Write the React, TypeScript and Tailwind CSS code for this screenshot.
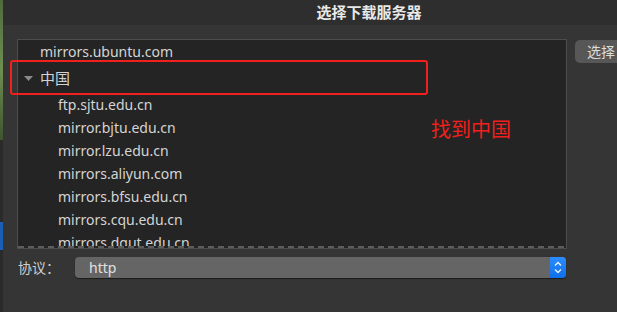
import React from 'react';

const mirrors = [
  'ftp.sjtu.edu.cn',
  'mirror.bjtu.edu.cn',
  'mirror.lzu.edu.cn',
  'mirrors.aliyun.com',
  'mirrors.bfsu.edu.cn',
  'mirrors.cqu.edu.cn',
  'mirrors.dgut.edu.cn',
];

const font = 'font-["Noto_Sans","Noto_Sans_CJK_SC",sans-serif]';

function Stepper() {
  return (
    <div className="flex h-full w-[16px] flex-col items-center justify-center gap-[3px] rounded-r-[4px] bg-gradient-to-b from-[#2b8cff] to-[#0d6fe8]">
      <svg width="8" height="5" viewBox="0 0 8 5">
        <path d="M1 4.5 L4 1.5 L7 4.5" stroke="#e8f2ff" strokeWidth="1.4" fill="none" />
      </svg>
      <svg width="8" height="5" viewBox="0 0 8 5">
        <path d="M1 0.5 L4 3.5 L7 0.5" stroke="#e8f2ff" strokeWidth="1.4" fill="none" />
      </svg>
    </div>
  );
}

export default function App() {
  return (
    <div className={`relative flex h-[312px] w-[617px] overflow-hidden bg-[#353535] ${font}`}>
      {/* sliver of the window behind */}
      <div className="flex w-[3px] shrink-0 flex-col">
        <div className="h-[140px] bg-gradient-to-b from-[#4f6a3e] via-[#6f8f52] to-[#3e5530]" />
        <div className="h-[82px] bg-[#2a2a2a]" />
        <div className="h-[28px] bg-[#1a5fb4]" />
        <div className="flex-1 bg-[#2a2a2a]" />
      </div>

      {/* dialog runs past the right edge of the shot */}
      <div className="flex w-[732px] shrink-0 flex-col">
        <div className="flex h-[25px] items-center justify-center bg-[#2e2e2e] text-[15px] font-bold text-[#e8e8e8]">
          选择下载服务器
        </div>

        <div className="flex flex-col pl-[14px] pt-[14px]">
          <div className="flex items-start gap-[8px]">
            <div className="flex h-[210px] w-[550px] shrink-0 flex-col border border-[#4d4d4d] bg-[#242424]">
              <div className="flex flex-1 flex-col overflow-hidden text-[14px] text-[#d4d4d4]">
                <div className="flex h-[23px] shrink-0 items-center pl-[22px]">mirrors.ubuntu.com</div>
                <div className="flex h-[30px] shrink-0 items-center gap-[7px] pl-[6px]">
                  <svg width="9" height="5" viewBox="0 0 9 5">
                    <path d="M0 0 H9 L4.5 5 Z" fill="#8a8a8a" />
                  </svg>
                  <span className="text-[15px]">中国</span>
                </div>
                {mirrors.map((m) => (
                  <div key={m} className="flex h-[23px] shrink-0 items-center pl-[40px]">
                    {m}
                  </div>
                ))}
              </div>
              <div className="h-[2px] shrink-0 bg-[repeating-linear-gradient(90deg,#5c5c5c_0_6px,transparent_6px_10px)]" />
            </div>
            <button className="mt-[1px] flex h-[23px] w-[60px] shrink-0 items-center rounded-[5px] bg-[#575757] pl-[12px] text-[14px] text-[#dcdcdc]">
              选择
            </button>
          </div>

          <div className="mt-[8px] flex h-[21px] items-center">
            <span className="w-[58px] pl-[1px] text-[14px] text-[#d0d0d0]">协议：</span>
            <div className="flex h-[21px] w-[491px] items-center rounded-[4px] bg-[#656565] shadow-[0_1px_1px_rgba(0,0,0,0.5)]">
              <span className="flex-1 pl-[14px] text-[14px] text-[#e0e0e0]">http</span>
              <Stepper />
            </div>
          </div>
        </div>
      </div>

      {/* annotation overlay */}
      <div className="absolute left-[10px] top-[60px] h-[35px] w-[418px] rounded-[3px] border-2 border-[#f0201c]" />
      <div className="absolute left-[431px] top-[117px] text-[20px] leading-[26px] text-[#f0201c]">找到中国</div>
    </div>
  );
}
